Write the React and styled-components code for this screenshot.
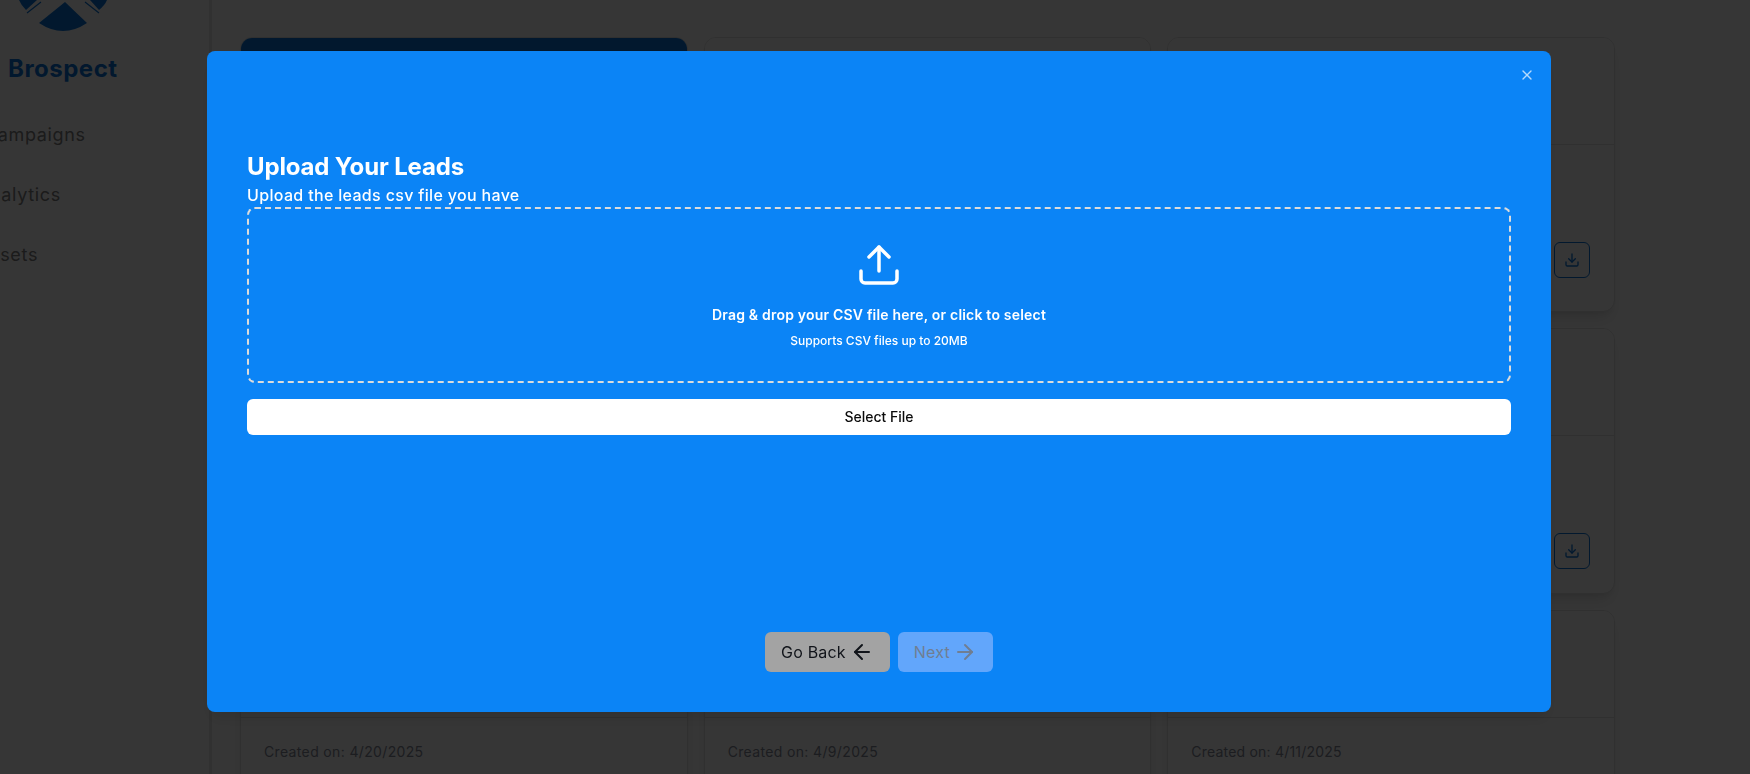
import React from "react";
import styled, { createGlobalStyle } from "styled-components";
import { X, Upload, ArrowLeft, ArrowRight, Download } from "lucide-react";

const FONT = `Inter, "Noto Sans", "Liberation Sans", sans-serif`;
const BLUE = "#0b84f6";
const BRAND = "#0a74da";

const Global = createGlobalStyle`
  html, body { margin: 0; height: 100%; overflow: hidden; background: #fff; }
  body { font-family: ${FONT}; }
  * { box-sizing: border-box; }
`;

const Page = styled.div`
  display: flex;
  width: 1750px;
  height: 774px;
  overflow: hidden;
  background: #fff;
`;

const Sidebar = styled.aside`
  flex: 0 0 212px;
  display: flex;
  flex-direction: column;
  border-right: 3px solid #e8e8e8;
`;

const LogoMark = styled.svg`
  display: block;
  width: 128px;
  height: 32px;
  flex: none;
`;

const Brand = styled.div`
  margin: 21px 0 0 8px;
  font-size: 24px;
  line-height: 32px;
  font-weight: 700;
  letter-spacing: 0.5px;
  color: ${BRAND};
`;

const Nav = styled.nav`
  display: flex;
  flex-direction: column;
  gap: 36px;
  margin: 38px 0 0 -16px;
`;

const NavItem = styled.a`
  font-size: 18px;
  line-height: 24px;
  letter-spacing: 0.65px;
  color: #808080;
  white-space: nowrap;
  margin-left: ${(p) => p.$shift || 0}px;
`;

const Main = styled.main`
  flex: none;
  padding: 37px 0 0 28px;
`;

const Grid = styled.div`
  display: grid;
  width: 1375px;
  grid-template-columns: repeat(3, 1fr);
  grid-auto-rows: min-content;
  gap: 16px;
`;

const Card = styled.article`
  display: flex;
  flex-direction: column;
  min-height: ${(p) => p.$minH || 264}px;
  background: #fff;
  border: 1px solid #e2e2e2;
  border-radius: 12px;
  box-shadow: 0 10px 15px -3px rgba(0, 0, 0, 0.1), 0 4px 6px -4px rgba(0, 0, 0, 0.1);
  overflow: hidden;
`;

const CardHead = styled.header`
  flex: 0 0 107px;
  background: ${(p) => (p.$featured ? BRAND : "#fff")};
  border-bottom: 1px solid #e2e2e2;
`;

const CardBody = styled.div`
  display: flex;
  justify-content: flex-end;
  padding: 97px 24px 24px;
`;

const IconButton = styled.button`
  display: flex;
  align-items: center;
  justify-content: center;
  width: 36px;
  height: 36px;
  padding: 0;
  background: #fff;
  color: ${BRAND};
  border: 1px solid ${BRAND};
  border-radius: 6px;
`;

const CardDate = styled.p`
  margin: 0;
  padding: 24px 23px;
  font-size: 14px;
  line-height: 20px;
  letter-spacing: ${(p) => p.$track || 0.2}px;
  color: #858a98;
`;

const Overlay = styled.div`
  position: fixed;
  inset: 0;
  display: flex;
  padding: 51px 199px 62px 207px;
  background: rgba(0, 0, 0, 0.788);
`;

const Modal = styled.section`
  position: relative;
  flex: 1;
  display: flex;
  flex-direction: column;
  padding: 99px 40px 40px;
  background: ${BLUE};
  border-radius: 8px;
  box-shadow: 0 10px 15px -3px rgba(0, 0, 0, 0.1);
  color: #fff;
`;

const Close = styled.button`
  position: absolute;
  top: 16px;
  right: 16px;
  display: flex;
  padding: 0;
  background: none;
  border: 0;
  color: #fff;
  opacity: 0.7;
`;

const Title = styled.h2`
  margin: 0;
  font-size: 24px;
  line-height: 33px;
  font-weight: 700;
  letter-spacing: -0.15px;
`;

const Subtitle = styled.p`
  margin: 0;
  font-size: 16px;
  line-height: 24px;
  font-weight: 500;
  letter-spacing: 0.33px;
`;

const Dropzone = styled.div`
  display: flex;
  flex-direction: column;
  align-items: center;
  height: 176px;
  padding-top: 32px;
  border: 2px dashed #dcdcdc;
  border-radius: 8px;
`;

const DropTitle = styled.p`
  margin: 16px 0 0;
  font-size: 14px;
  line-height: 20px;
  font-weight: 600;
  letter-spacing: 0.2px;
`;

const DropHint = styled.p`
  margin: 8px 0 0;
  font-size: 12px;
  line-height: 16px;
  font-weight: 500;
`;

const SelectButton = styled.button`
  height: 36px;
  margin-top: 16px;
  background: #fff;
  border: 0;
  border-radius: 6px;
  font: 500 14px/20px ${FONT};
  color: #0a0a0a;
`;

const Footer = styled.div`
  display: flex;
  justify-content: center;
  gap: 8px;
  margin-top: auto;
`;

const StepButton = styled.button`
  display: flex;
  align-items: center;
  gap: ${(p) => p.$gap}px;
  height: 40px;
  padding: 0 16px;
  border: 0;
  border-radius: 6px;
  background: ${(p) => (p.$disabled ? "#62a6fb" : "#a3a3a3")};
  color: ${(p) => (p.$disabled ? "#707e92" : "#11141a")};
  font: 400 16px/24px ${FONT};
  letter-spacing: 0.2px;
`;

const rows = [{ minH: 275 }, { minH: 264 }];

const dates = [
  { text: "Created on: 4/20/2025", track: 0.35 },
  { text: "Created on: 4/9/2025", track: 0.35 },
  { text: "Created on: 4/11/2025", track: 0.2 },
];

export default function App() {
  return (
    <>
      <Global />
      <Page>
        <Sidebar>
          <LogoMark viewBox="0 0 128 32" aria-hidden="true">
            <path d="M65 2 L87 23 Q63 39 39 23 Z" fill={BRAND} />
            <path d="M19 0 L37 0 L26 10 Q21 5 19 0 Z" fill={BRAND} />
            <path d="M90 0 L107 0 Q105 5 99 10 Z" fill={BRAND} />
            <path d="M27 13 L41 2 M85 2 L99 13" stroke={BRAND} strokeWidth="1.2" fill="none" />
          </LogoMark>
          <Brand>Brospect</Brand>
          <Nav>
            <NavItem>Campaigns</NavItem>
            <NavItem $shift={-7}>Analytics</NavItem>
            <NavItem $shift={-7}>Assets</NavItem>
          </Nav>
        </Sidebar>
        <Main>
          <Grid>
            {rows.map((row, r) =>
              [0, 1, 2].map((c) => (
                <Card key={`${r}-${c}`} $minH={row.minH}>
                  <CardHead $featured={r === 0 && c === 0} />
                  <CardBody>
                    <IconButton aria-label="Download">
                      <Download size={16} />
                    </IconButton>
                  </CardBody>
                </Card>
              ))
            )}
            {dates.map((d) => (
              <Card key={d.text}>
                <CardHead />
                <CardDate $track={d.track}>{d.text}</CardDate>
              </Card>
            ))}
          </Grid>
        </Main>
      </Page>
      <Overlay>
        <Modal>
          <Close aria-label="Close">
            <X size={16} />
          </Close>
          <Title>Upload Your Leads</Title>
          <Subtitle>Upload the leads csv file you have</Subtitle>
          <Dropzone>
            <Upload size={48} strokeWidth={1.75} />
            <DropTitle>Drag &amp; drop your CSV file here, or click to select</DropTitle>
            <DropHint>Supports CSV files up to 20MB</DropHint>
          </Dropzone>
          <SelectButton>Select File</SelectButton>
          <Footer>
            <StepButton $gap={4}>
              Go Back <ArrowLeft size={24} strokeWidth={2} />
            </StepButton>
            <StepButton $disabled $gap={3}>
              Next <ArrowRight size={24} strokeWidth={2} />
            </StepButton>
          </Footer>
        </Modal>
      </Overlay>
    </>
  );
}
